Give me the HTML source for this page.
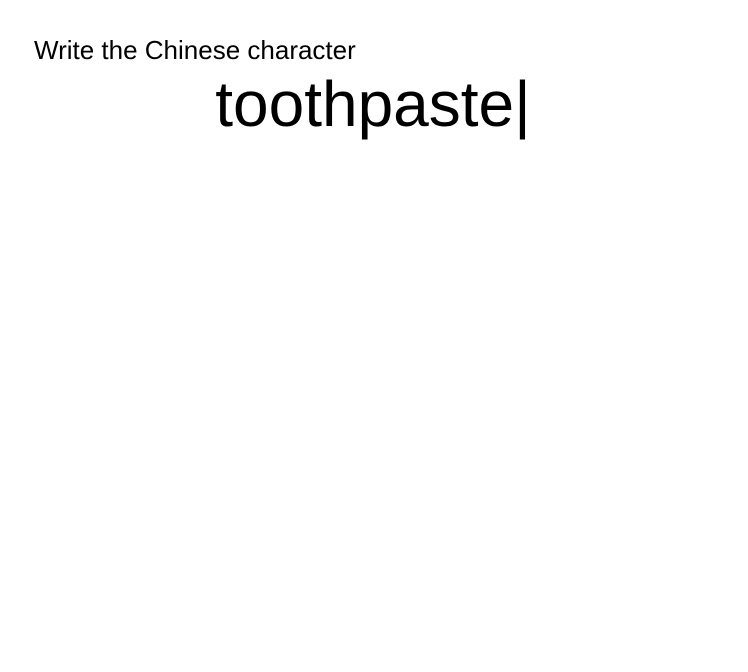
<!DOCTYPE html>
<html><head><meta charset="utf-8"><style>
html,body{margin:0;padding:0;background:#fff;width:748px;height:672px;overflow:hidden;}
.a{position:absolute;font-family:"Liberation Sans",Arial,sans-serif;color:#000;white-space:nowrap;}
#t1{left:34px;top:37px;font-size:26px;line-height:26px;}
#t2{left:-1px;width:748px;text-align:center;top:72px;font-size:64px;line-height:64px;}
</style></head><body>
<div class="a" id="t1">Write the Chinese character</div>
<div class="a" id="t2">toothpaste|</div>
</body></html>
